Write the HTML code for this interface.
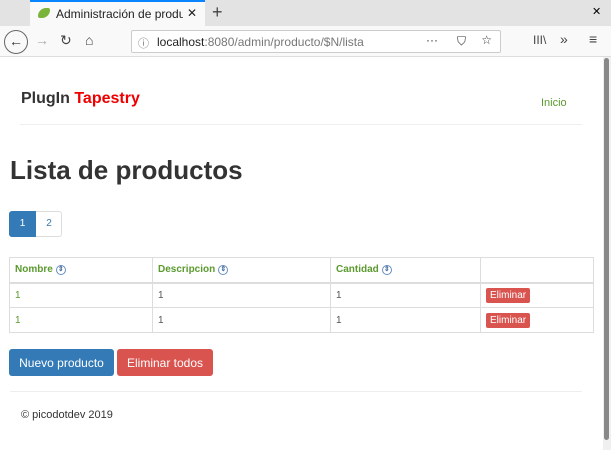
<!DOCTYPE html>
<html><head><meta charset="utf-8"><style>
*{box-sizing:border-box;margin:0;padding:0}
body{width:611px;height:450px;overflow:hidden;font-family:"Liberation Sans",sans-serif;background:#fff;position:relative}
.abs{position:absolute;white-space:nowrap}
.tabbar{left:0;top:0;width:611px;height:26px;background:#e3e3e3}
.tab{left:30px;top:0;width:175px;height:27px;background:#f9f9f9;border-top:2px solid #0a84ff;font-size:12px;color:#222;padding:5px 0 0 26px;overflow:hidden}
.nav{left:0;top:26px;width:611px;height:31px;background:#f9f9f9;border-bottom:1px solid #ddd}
.url{left:131px;top:30px;width:370px;height:23px;background:#fff;border:1px solid #ccc;border-radius:2px;font-size:12px;color:#777;padding:4px 0 0 25px}
.url b{color:#222;font-weight:normal}
.ic{font-size:14px;color:#444}
.sb{left:603px;top:57px;width:8px;height:393px;background:#f0f0f0}
.sbt{left:604px;top:58px;width:5px;height:382px;background:#888;border-radius:3px}
.g{color:#5a9a2e}
table{border-collapse:collapse;font-size:10px;table-layout:fixed}
td,th{border:1px solid #ddd;height:25px;padding:0 5px;text-align:left;color:#555;vertical-align:middle}
th{color:#5a9a2e;font-weight:bold;border-bottom:2px solid #ddd}
td.g{color:#5a9a2e}
.s{display:inline-block;width:10px;height:10px;border:1px solid #6a8fc0;border-radius:50%;vertical-align:middle;margin-left:3px;font-size:7px;line-height:8px;text-align:center;color:#4a70a0}
.del{background:#d9534f;color:#fff;font-size:10px;padding:2px 4px;border-radius:2px}
.btn{height:27px;border-radius:3px;color:#fff;font-size:12px;padding:7px 0;text-align:center}
</style></head><body>
<div class="abs tabbar"></div>
<div class="abs tab"><span class="abs" style="left:8px;top:6px;width:12px;height:10px;background:#7bb43a;border-radius:8px 2px 8px 2px"></span>Administración de produc<span class="abs" style="right:0;top:0;width:22px;height:24px;font-size:12px;background:#f9f9f9;padding:4px 0 0 4px">✕</span></div>
<div class="abs ic" style="left:212px;top:2px;font-size:18px">+</div>
<div class="abs" style="left:592px;top:5px;font-size:11px">✕</div>
<div class="abs nav"></div>
<div class="abs" style="left:4px;top:30px;width:24px;height:24px;border:1px solid #666;border-radius:50%;font-size:14px;text-align:center;line-height:21px;color:#333">←</div>
<div class="abs ic" style="left:35px;top:32px;color:#aaa">→</div>
<div class="abs ic" style="left:60px;top:32px">↻</div>
<div class="abs ic" style="left:85px;top:32px">⌂</div>
<div class="abs url"><span class="abs" style="left:6px;top:4px;font-size:11px">ⓘ</span><b>localhost</b>:8080/admin/producto/$N/lista<span class="abs" style="right:62px;top:2px;color:#333">···</span><span class="abs" style="right:34px;top:3px;color:#333">⛉</span><span class="abs" style="right:8px;top:2px;color:#333">☆</span></div>
<div class="abs ic" style="left:533px;top:33px;font-size:12px">III\</div>
<div class="abs ic" style="left:560px;top:31px">»</div>
<div class="abs ic" style="left:589px;top:31px">≡</div>
<div class="abs sb"></div><div class="abs sbt"></div>

<div class="abs" style="left:21px;top:90px;font-size:16px;font-weight:bold;color:#333">PlugIn <span style="color:#e00">Tapestry</span></div>
<div class="abs g" style="left:541px;top:97px;font-size:11px">Inicio</div>
<div class="abs" style="left:20px;top:124px;width:562px;height:1px;background:#eee"></div>
<div class="abs" style="left:10px;top:155px;font-size:26px;font-weight:bold;color:#333">Lista de productos</div>
<div class="abs" style="left:9px;top:211px;width:53px;height:26px;border:1px solid #ddd;border-radius:3px;font-size:10px">
<div class="abs" style="left:-1px;top:-1px;width:27px;height:26px;background:#337ab7;color:#fff;border-radius:3px 0 0 3px;text-align:center;line-height:26px">1</div>
<div class="abs" style="left:26px;top:0;width:26px;text-align:center;line-height:24px;color:#337ab7">2</div></div>
<table class="abs" style="left:9px;top:257px;width:585px">
<tr><th style="width:143px">Nombre<span class="s">⇕</span></th><th style="width:178px">Descripcion<span class="s">⇕</span></th><th style="width:150px">Cantidad<span class="s">⇕</span></th><th></th></tr>
<tr><td class="g">1</td><td>1</td><td>1</td><td><span class="del">Eliminar</span></td></tr>
<tr><td class="g">1</td><td>1</td><td>1</td><td><span class="del">Eliminar</span></td></tr>
</table>
<div class="abs btn" style="left:9px;top:349px;width:105px;background:#337ab7">Nuevo producto</div>
<div class="abs btn" style="left:117px;top:349px;width:96px;background:#d9534f">Eliminar todos</div>
<div class="abs" style="left:10px;top:391px;width:572px;height:1px;background:#eee"></div>
<div class="abs" style="left:21px;top:409px;font-size:11px;color:#333">© picodotdev 2019</div>
</body></html>
